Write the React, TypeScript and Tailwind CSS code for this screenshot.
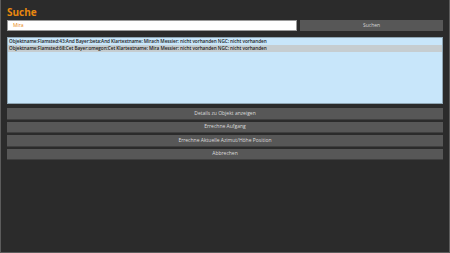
export default function App() {
  const rows = [
    "Objektname:Flamsted:43:And Bayer:beta:And Klartextname: Mirach Messier: nicht vorhanden NGC: nicht vorhanden",
    "Objektname:Flamsted:68:Cet Bayer:omegon:Cet Klartextname: Mira Messier: nicht vorhanden NGC: nicht vorhanden",
  ];
  const actions = [
    "Details zu Objekt anzeigen",
    "Errechne Aufgang",
    "Errechne Aktuelle Azimut/Höhe Position",
    "Abbrechen",
  ];

  return (
    <div
      className="flex h-[253px] w-[450px] flex-col border-b border-l border-r border-[#5c5c5c] bg-[#2b2b2b] px-[6px]"
      style={{ fontFamily: '"Open Sans", "Noto Sans", sans-serif' }}
    >
      <h1 className="mt-[6px] h-[13px] text-[10px] font-bold leading-[13px] text-[#e8870f]">Suche</h1>

      <div className="mt-[1px] flex h-[11px] gap-[3px]">
        <div className="flex flex-1 items-center border border-[#9a9a9a] bg-white pl-[5px] text-[5px] text-[#e8870f]">
          Mira
        </div>
        <button className="flex w-[143px] items-center justify-center bg-[#575757] text-[5px] text-[#d6d6d6]">
          Suchen
        </button>
      </div>

      <div className="mt-[6px] h-[67px] border border-[#8fa6b4] bg-[#c8e6fa]">
        {rows.map((r, i) => (
          <div
            key={i}
            className={`h-[7px] pl-[1px] text-[4.7px] font-semibold leading-[7px] tracking-[-0.05px] text-[#1a1a1a] ${i === 1 ? "bg-[#c6cdd0]" : ""}`}
          >
            {r}
          </div>
        ))}
      </div>

      <div className="mt-[4px] flex flex-col gap-[2px]">
        {actions.map((a) => (
          <button
            key={a}
            className="flex h-[11.5px] items-center justify-center border-b border-[#3f3f3f] bg-[#575757] text-[5px] text-[#dcdcdc]"
          >
            {a}
          </button>
        ))}
      </div>
    </div>
  );
}
